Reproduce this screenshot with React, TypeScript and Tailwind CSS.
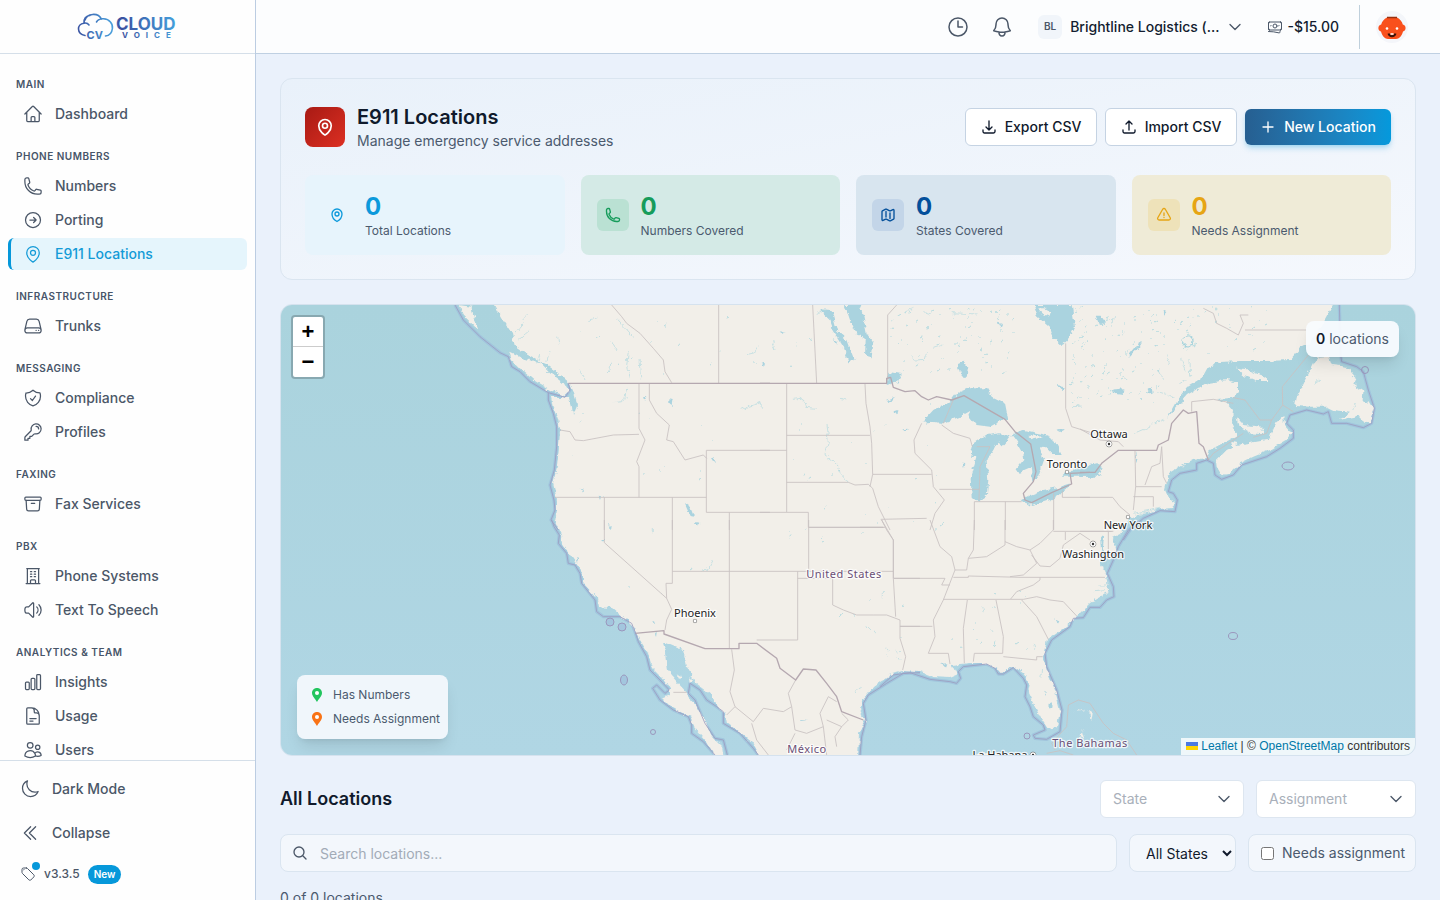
import { useState } from 'react';
import type { ComponentType, ReactNode } from 'react';
import {
  HiOutlineHome,
  HiOutlinePhone,
  HiOutlineArrowRightCircle,
  HiOutlineMapPin,
  HiOutlineServer,
  HiOutlineShieldCheck,
  HiOutlineKey,
  HiOutlineArchiveBox,
  HiOutlineBuildingOffice,
  HiOutlineSpeakerWave,
  HiOutlineChartBar,
  HiOutlineDocumentText,
  HiOutlineUsers,
  HiOutlineMoon,
  HiOutlineChevronDoubleLeft,
  HiOutlineTag,
  HiOutlineClock,
  HiOutlineBell,
  HiOutlineChevronDown,
  HiOutlineBanknotes,
  HiOutlineArrowDownTray,
  HiOutlineArrowUpTray,
  HiOutlinePlus,
  HiOutlineMap,
  HiOutlineExclamationTriangle,
  HiOutlineMagnifyingGlass,
} from 'react-icons/hi2';

type Icon = ComponentType<{ className?: string }>;

const sections: { title: string; items: { label: string; icon: Icon; active?: boolean }[] }[] = [
  { title: 'Main', items: [{ label: 'Dashboard', icon: HiOutlineHome }] },
  {
    title: 'Phone Numbers',
    items: [
      { label: 'Numbers', icon: HiOutlinePhone },
      { label: 'Porting', icon: HiOutlineArrowRightCircle },
      { label: 'E911 Locations', icon: HiOutlineMapPin, active: true },
    ],
  },
  { title: 'Infrastructure', items: [{ label: 'Trunks', icon: HiOutlineServer }] },
  {
    title: 'Messaging',
    items: [
      { label: 'Compliance', icon: HiOutlineShieldCheck },
      { label: 'Profiles', icon: HiOutlineKey },
    ],
  },
  { title: 'Faxing', items: [{ label: 'Fax Services', icon: HiOutlineArchiveBox }] },
  {
    title: 'PBX',
    items: [
      { label: 'Phone Systems', icon: HiOutlineBuildingOffice },
      { label: 'Text To Speech', icon: HiOutlineSpeakerWave },
    ],
  },
  {
    title: 'Analytics & Team',
    items: [
      { label: 'Insights', icon: HiOutlineChartBar },
      { label: 'Usage', icon: HiOutlineDocumentText },
      { label: 'Users', icon: HiOutlineUsers },
    ],
  },
];

function Logo() {
  return (
    <svg viewBox="0 0 104 32" className="h-8 w-26" role="img" aria-label="Cloud Voice">
      <defs>
        <linearGradient id="brand" gradientUnits="userSpaceOnUse" x1="0" y1="20" x2="104" y2="10">
          <stop offset="0" stopColor="#3a4f9f" />
          <stop offset="0.35" stopColor="#4aa0dc" />
          <stop offset="0.42" stopColor="#3a4f9f" />
          <stop offset="1" stopColor="#45a5e0" />
        </linearGradient>
      </defs>
      <g fill="none" stroke="url(#brand)" strokeWidth="1.6" strokeLinecap="round">
        <path d="M9 24.500C.5 23 .5 13 8 12.200C7.500 8 10 4.500 14 4.500M8 12.200C10 11.800 12 12.500 13 14M9 9C11 2.500 22 1 25.500 8.200M20.500 11C22 8.500 24.500 7.600 27.500 7.800C33.500 8.200 37 12.500 36.400 17.500C35.900 22 33.500 24.700 29.500 25" />
      </g>
      <g fill="url(#brand)" fontFamily="Inter, sans-serif" fontWeight="700">
        <text x="10.500" y="27.500" fontSize="11">CV</text>
        <text x="40" y="19" fontSize="17">CLOUD</text>
        <text x="46" y="27" fontSize="8" letterSpacing="6">VOICE</text>
      </g>
    </svg>
  );
}

function Sidebar() {
  return (
    <aside className="flex w-64 shrink-0 flex-col border-r border-[#bccde2] bg-[#fefefe]">
      <div className="flex h-[54px] shrink-0 items-center justify-center border-b border-[#d5dfe9]">
        <Logo />
      </div>
      <nav className="min-h-0 flex-1 overflow-hidden px-2 pt-[22px]" aria-label="Primary">
        {sections.map((section) => (
          <div key={section.title} className="mb-[18px]">
            <h2 className="mb-1.5 pl-2 text-[10px] leading-4 font-semibold tracking-wider text-[#475569] uppercase">
              {section.title}
            </h2>
            <ul className="flex flex-col gap-0.5">
              {section.items.map(({ label, icon: ItemIcon, active }) => (
                <li key={label}>
                  <a
                    href="#"
                    aria-current={active ? 'page' : undefined}
                    className={
                      active
                        ? 'flex h-8 items-center gap-3 rounded-md border-l-3 border-[#0698da] bg-[#e5f5fc] pl-3 text-sm font-medium text-[#149bd7]'
                        : 'flex h-8 items-center gap-3 rounded-md border-l-3 border-transparent pl-3 text-sm font-medium text-[#4b5768]'
                    }
                  >
                    <ItemIcon className="size-5" />
                    {label}
                  </a>
                </li>
              ))}
            </ul>
          </div>
        ))}
      </nav>
      <div className="flex shrink-0 flex-col border-t border-[#d5dfe9] px-5 pt-2 pb-3 text-[#4b5768]">
        <button type="button" className="flex h-10 items-center gap-3 text-left text-sm font-medium">
          <HiOutlineMoon className="size-5" />
          Dark Mode
        </button>
        <button type="button" className="mt-1 flex h-10 items-center gap-3 text-left text-sm font-medium">
          <HiOutlineChevronDoubleLeft className="size-5" />
          Collapse
        </button>
        <a href="#" className="mt-[7px] flex h-7 items-center gap-2 text-xs font-medium">
          <span className="relative">
            <HiOutlineTag className="size-4" />
            <span className="absolute -top-1 -right-1 size-2 rounded-full bg-[#0698da]" />
          </span>
          v3.3.5
          <span className="rounded-full bg-[#0698da] px-1.5 py-0.5 text-[10px] leading-[15px] font-semibold text-white">
            New
          </span>
        </a>
      </div>
    </aside>
  );
}

function Avatar() {
  return (
    <svg viewBox="0 0 32 32" className="size-8 rounded-full bg-[#f4f6fa]" role="img" aria-label="Account">
      <path d="M11 6.500H21C24 8 26 10.500 26.800 13.500C30.500 14 30.500 20 27 20.500C26 25 23 28 20 28H12C9 28 6 25 5 20.500C1.500 20 1.500 14 5.200 13.500C6 10.500 8 8 11 6.500Z" fill="#f9501c" />
      <path d="M11 6.500H21" stroke="#99310f" strokeWidth="1.500" />
      <circle cx="11" cy="17.500" r="1.300" fill="#fff" />
      <circle cx="21" cy="17.500" r="1.300" fill="#fff" />
      <path d="M12.500 22.500C13.500 26 18.500 26 19.500 22.500" stroke="#3a1208" strokeWidth="2" fill="none" />
      <path d="M14.500 23H17.500" stroke="#fff" strokeWidth="1.500" />
    </svg>
  );
}

function TopBar() {
  return (
    <header className="flex h-[54px] shrink-0 items-center justify-end border-b border-[#bfd0e2] bg-[#fcfdfe] pr-8 text-[#4b5768]">
      <button type="button" aria-label="History" className="mr-5">
        <HiOutlineClock className="size-6" />
      </button>
      <button type="button" aria-label="Notifications" className="mr-6">
        <HiOutlineBell className="size-6" />
      </button>
      <button type="button" className="flex items-center gap-2 text-sm font-medium text-[#131d30]">
        <span className="flex size-6 items-center justify-center rounded-md bg-[#f1f5fa] text-[10px] font-semibold text-[#4b5768]">
          BL
        </span>
        Brightline Logistics (...
        <HiOutlineChevronDown className="mr-1 size-4 stroke-2 text-[#4b5768]" />
      </button>
      <a href="#" className="ml-5 flex items-center gap-1 text-sm font-medium text-[#131d30]">
        <HiOutlineBanknotes className="size-4 text-[#4b5768]" />
        -$15.00
      </a>
      <div className="mr-4 ml-5 h-11 w-px bg-[#bfd0dc]" />
      <button type="button" aria-label="Account menu">
        <Avatar />
      </button>
    </header>
  );
}

const stats: { label: string; icon: Icon; card: string; box: string; tone: string }[] = [
  { label: 'Total Locations', icon: HiOutlineMapPin, card: 'bg-[#e7f4fc]', box: 'bg-[#e7f4fc]', tone: 'text-[#0c99db]' },
  { label: 'Numbers Covered', icon: HiOutlinePhone, card: 'bg-[#d4eae6]', box: 'bg-[#bae1d3]', tone: 'text-[#169c5b]' },
  { label: 'States Covered', icon: HiOutlineMap, card: 'bg-[#d8e5ef]', box: 'bg-[#c3d5e8]', tone: 'text-[#04509b]' },
  { label: 'Needs Assignment', icon: HiOutlineExclamationTriangle, card: 'bg-[#efebd7]', box: 'bg-[#eee2b9]', tone: 'text-[#e6a514]' },
];

function Summary() {
  return (
    <section className="rounded-xl border border-[#dae5f0] bg-linear-to-br from-[#e9f1fa] to-[#f5f8fd] p-6">
      <div className="flex items-center justify-between gap-6">
        <div className="flex items-center gap-3">
          <div className="flex size-10 items-center justify-center rounded-lg bg-linear-to-br from-[#a81a14] to-[#dc2f22] text-white">
            <HiOutlineMapPin className="size-5 stroke-2" />
          </div>
          <div>
            <h1 className="text-xl leading-7 font-semibold text-[#101a2c]">E911 Locations</h1>
            <p className="text-sm leading-5 text-[#4b5a6e]">Manage emergency service addresses</p>
          </div>
        </div>
        <div className="flex items-center gap-2 text-sm font-medium">
          <button type="button" className="flex h-[38px] w-33 items-center justify-center gap-2 rounded-md border border-[#c5d3e3] bg-white text-[#101a2c]">
            <HiOutlineArrowDownTray className="size-4 stroke-2" />
            Export CSV
          </button>
          <button type="button" className="flex h-[38px] w-33 items-center justify-center gap-2 rounded-md border border-[#c5d3e3] bg-white text-[#101a2c]">
            <HiOutlineArrowUpTray className="size-4 stroke-2" />
            Import CSV
          </button>
          <button type="button" className="flex h-9 w-[146px] items-center justify-center gap-2 rounded-md bg-linear-to-r from-[#265f91] to-[#0499dc] text-white shadow-md shadow-[#0499dc]/25">
            <HiOutlinePlus className="size-4 stroke-2" />
            New Location
          </button>
        </div>
      </div>
      <dl className="mt-6 grid grid-cols-4 gap-4">
        {stats.map(({ label, icon: StatIcon, card, box, tone }) => (
          <div key={label} className={`flex items-center gap-3 rounded-lg p-4 ${card} ${tone}`}>
            <span className={`flex size-8 items-center justify-center rounded-md ${box}`}>
              <StatIcon className="size-4 stroke-2" />
            </span>
            <div className="flex flex-col-reverse">
              <dt className="text-xs leading-4 text-[#4b5a6e]">{label}</dt>
              <dd className="text-2xl leading-8 font-bold">0</dd>
            </div>
          </div>
        ))}
      </dl>
    </section>
  );
}

const mainland =
  'M495 305 502 318 512 333 515 347 527 355 540 362 547 365 557 372 565 380 570 384 575 395 577 405 573 415 572 407 569 397 551 397 553 407 558 420 560 430 559 447 557 467 553 483 557 500 557 510 555 522 561 535 562 543 568 552 575 562 583 573 583 583 597 598 598 607 612 608 623 617 633 627 640 640 648 653 652 667 662 677 670 688 670 694 662 697 673 708 690 717 695 728 707 742 717 760 724 760 722 747 712 737 705 720 697 707 687 693 677 682 667 670 665 653 663 642 675 647 683 650 687 667 695 682 712 695 718 707 725 713 727 722 740 732 753 743 762 760 858 760 859 733 865 720 860 710 862 700 873 687 890 675 903 671 920 672 933 677 950 678 957 675 952 665 970 663 983 663 993 667 1002 672 1013 666 1023 673 1030 683 1028 693 1035 707 1042 720 1048 729 1057 727 1060 710 1055 690 1047 670 1043 657 1047 640 1057 633 1070 623 1077 616 1090 603 1108 592 1107 580 1105 570 1100 563 1102 547 1108 560 1117 548 1112 537 1120 533 1128 522 1130 517 1147 513 1160 509 1172 508 1175 502 1168 497 1165 490 1167 482 1170 473 1180 467 1193 460 1207 458 1210 450 1223 443 1237 435 1232 423 1233 410 1227 403 1217 399 1232 398 1238 392 1238 383 1227 380 1207 383 1187 395 1167 418 1177 400 1187 387 1203 377 1208 368 1220 362 1240 361 1267 361 1290 360 1300 348 1310 343 1325 320 1336 300 495 300Z';

// Each sheet is drawn at three times the size of the map, from its own corner.
const sheets: { at: string; land?: string; water?: string; sea?: string; state: string; country?: string; streams?: string }[] = [
  {
    at: 'translate(440 300) scale(.33333)',
    land: 'M208 155 250 175 300 190 330 220 370 250 385 275 370 288 330 270 280 240 240 205 215 180ZM55 15 95 20 100 50 118 88 105 80 75 50Z',
    water: 'M735 610 750 620 762 650 752 648ZM688 298 698 300 695 318 688 312ZM965 188 978 190 976 198ZM816 474 826 472 824 486ZM612 290 622 292 616 302ZM422 565 432 570 430 580ZM476 590 484 588 480 600ZM502 675 512 685 508 690ZM768 668 776 666 772 678Z',
    sea: 'M45 15 70 60 120 110 180 158 205 170 215 200 240 215 270 245 325 278 375 292 390 270 385 250M325 278V300L340 340 350 380V440L343 510 330 555 342 600 345 630 333 660 355 690',
    state: 'M515 15 545 50 560 70 600 100 640 145 670 180 675 215 695 248M836 15V250M597 252V385L615 420 590 485 597 500V592M628 252V300L650 340 688 375 680 420 700 425 735 480 790 465 800 475M990 451H799V637H990M345 592H799M493 592V690M697 592V690M868 637V690M360 390 390 395 405 420 430 422 520 405 597 403',
    country: 'M385 250H990',
    streams: 'M905 328 930 318 950 312 958 302 965 320M515 308 545 305 555 295 560 265M500 220 510 210 512 185M568 235 560 200 565 150M600 180 605 235M515 125 528 150M445 62 475 52M915 162 945 155 955 140M420 210 435 240M350 110 355 135M300 160 290 190M250 70 225 100M270 90 235 120M530 55 580 110M260 45 245 60M330 150 320 185',
  },
  {
    at: 'translate(760 300) scale(.33333)',
    water:
      'M485 368 520 330 575 300 590 280 625 265 680 265 695 290 735 310 745 360 725 360 690 380 650 375 625 345 632 332 600 350 550 370 520 365ZM630 470 640 430 680 405 720 400 755 408 730 440 712 425 700 450 680 480 685 540 680 590 655 608 635 590 632 530 650 470ZM755 405 790 390 850 402 880 415 905 465 880 465 850 435 840 448 852 480 835 530 820 545 815 500 780 515 765 510 790 480 785 450 770 425ZM785 598 810 585 850 570 900 560 935 550 920 570 870 600 815 618ZM905 530 930 510 990 503V530H915ZM820 15 830 45 870 80 880 110 905 135 930 110 945 80 935 15ZM255 15 300 15 310 50 320 100 340 130 335 175 318 170 320 120 290 100 270 60ZM178 28 215 30 232 95 262 120 285 180 265 187 250 140 232 112 218 92 212 60ZM592 190 610 182 625 200 620 228 600 225ZM385 215 425 222 412 248 398 250 380 255ZM378 300 402 290 396 306ZM400 335 415 330 412 350ZM428 388 440 386 436 396ZM218 118 230 122 232 138ZM62 95 74 92 72 102ZM715 68 726 72 722 80ZM892 258 915 262 905 270ZM892 388 918 387 905 394ZM608 490 616 488 612 505Z',
    land: 'M832 25 850 25 875 40 872 50 850 42ZM805 408 835 405 845 412 820 418Z',
    state:
      'M158 15 170 250M383 240V45L410 15M80 252V636M80 406H330M80 547H265L285 555 325 553 338 565 355 620 375 660 390 690M315 252 318 310 330 380 335 430 338 523H515M338 523 330 560M485 370 462 420 465 460 515 510 520 560 553 600 525 640 510 690M362 658 500 655M545 375 580 400 630 415 637 440M538 568H658M643 690V605H785M736 605V690M881 580V690M907 572V592H990M917 130V325L935 380 990 397M0 451H80M0 637H145V682H375M580 300 550 370M650 440 690 440 660 500 657 600',
    country: 'M0 250H380V235L392 232 400 262 435 275 465 272 485 290 505 300 530 290 575 300 612 287 735 358 765 395 812 432 828 515 820 545 790 580 795 600 815 608 875 578 935 552 930 520 990 517',
    streams: 'M98 298 120 295 135 305 140 322 170 325M198 375 205 430 195 465 235 495 240 520 265 547M240 295 262 300M450 165 470 180 495 178 500 160M520 145 550 135M575 38 650 42M490 35 510 42M430 35 460 25M38 125 45 150M170 40 200 30M940 320 965 318',
  },
  {
    at: 'translate(1080 300) scale(.33333)',
    land: 'M408 482 440 450 470 435 530 425 572 418 575 400 590 365 610 350 612 375 630 395 640 395 620 420 570 450 520 470 480 490 450 520 425 525 410 500ZM470 350 490 375 550 380 545 402 510 400 475 380ZM468 203 500 208 540 225 565 243 530 243 490 225ZM720 170 745 168 755 195 800 200 830 235 820 255 850 275 848 300 862 310 868 300 880 320 870 370 850 368 835 345 825 350 800 355 780 360 810 335 760 330 740 320 690 320 645 318 650 290 665 260 680 230 700 190ZM453 425 472 430 465 445Z',
    water: 'M0 503 50 490 68 500 55 530 0 530ZM145 165 165 140 188 125 170 150 150 170ZM98 270 130 265 128 285 108 282ZM200 265 215 265 218 278 208 280ZM50 50 62 50 75 70 60 75ZM250 30 262 36 254 46ZM168 452 172 480 168 490Z',
    sea: 'M130 720 150 690 190 655 240 632 285 635 292 600 280 580 265 575 275 540 300 520 350 510 350 490 380 480 400 490 405 525 425 538 460 525 485 495 560 470 600 445 640 415 640 390 620 370 630 345 680 330 730 342 745 335 755 370 800 370 850 383 875 370 883 325 865 270 850 215 830 200 785 185 782 165 778 15',
    state:
      'M0 387 60 420 115 425 130 440M165 452 167 560 160 630M245 440 240 490 215 500 195 555M167 560H245M245 440 250 530 260 550M160 590H220V620M0 592H98L120 620 150 645M0 694H100M495 90H680M370 25 400 40 410 70 440 85 475 105 490 70 480 45 505 45M685 165 607 260 608 315 640 335M608 315 575 360 540 360 510 320 495 300 460 293M335 335V305L400 298 460 310M575 360 560 400 520 412M490 400 400 460 385 480',
    country: 'M0 517H45L65 490 115 451H230L235 435 265 420 275 370 310 330 325 340 350 335 357 430 370 440 385 480',
    streams: 'M165 400 200 385 250 358M235 275 285 292M305 175 315 215M330 180 332 230M260 165 270 195M700 255 720 240M830 310 815 330M160 640 240 625M165 648 210 632M100 45 95 80M235 210 250 240M300 250 320 240M130 230 145 240',
  },
  {
    at: 'translate(540 520) scale(.33333)',
    land: 'M413 460 425 468 422 478ZM450 472 460 480 452 486Z',
    water: 'M330 300 340 305 342 314ZM204 12 212 16 210 26ZM470 10 478 8 474 18ZM190 60 196 60 194 68ZM108 108 118 112 114 130ZM780 597 805 600 780 602ZM345 338 350 338 348 352Z',
    sea: 'M35 0 42 20 58 45 55 70 80 100 85 130 105 135 120 160 125 190 165 240 170 275 190 290 240 290 275 310 285 335 295 365 320 410 330 450 360 480 388 510 375 520 350 495 338 505 360 540 400 570 445 590 455 615 455 640 490 665 525 705M562 705 550 660 525 655 495 610 465 540 445 520 450 490 480 510 500 540 530 560 550 575V610L600 640 640 685 655 705M960 705 965 650 978 600 970 550 985 525 1040 490 1090 460 1140 458',
    state:
      'M193 0V68L380 235 395 268 380 300 375 330M397 0V190H378L380 235M397 154H1060M568 0V385M806 0V154M806 22H1030M1025 0 1040 30 1060 60V175L1067 290M773 154V360H650M773 175H878V255L910 270 950 285 1000 285 1040 285 1080 300V355L1097 410 1088 450M1062 175H1140M1080 319H1140M575 388 583 450 570 515 585 560 560 585M585 560 640 605 670 565 730 575 755 560 745 520 767 480M755 560 765 630 800 640 850 620 840 580 865 530 890 545M860 600 905 620 925 600 905 580M635 610 650 660 685 705M400 517H440M765 640 740 690M850 620 860 705M905 620 885 650 890 680',
    country: 'M285 340 372 332V342L495 386H597V370H650L710 415 720 445 767 480 790 447 828 450 860 490 890 530 905 575 970 600',
    streams: 'M485 154 505 145 520 120M1035 400 1045 412M1070 388 1080 396M1030 215V235M340 30V45M945 515 965 505M1000 330 1008 340M980 320 990 330',
  },
  {
    at: 'translate(860 520) scale(.33333)',
    land: 'M340 705 380 695 420 705ZM660 655 665 630 672 655ZM640 575 660 570 675 572 660 574ZM685 572 698 580 695 598 692 582Z',
    water: 'M565 555 575 550 578 562 570 568ZM240 432 262 430 258 440ZM720 50 732 50 728 90 738 130 736 155 728 150 724 100ZM755 55 768 65 772 80ZM580 298 598 305 596 312ZM553 515 558 518 556 525Z',
    sea: 'M60 500 100 465 150 458 210 478 270 485 290 490 302 475 295 455 310 440 380 432 405 445 415 462 430 462 460 443 490 475 500 495 495 530 510 560 520 590 550 615 555 630 520 645 525 655 560 658 600 635 606 570 590 510 560 440 555 400 575 360 630 320 640 295 670 293 690 262 720 262 740 240 762 230 760 200 742 160 760 120 775 80 805 30 835 5',
    state:
      'M0 22H70M65 0 100 60V175H255L245 195H270M210 0 240 80 275 110 285 150 250 240 220 300 225 350 205 400H265L270 432M343 0 340 90 325 115 320 150 285 150M325 115 380 110 435 75V0M435 65 470 80 510 90 540 70 580 30V0M580 34H755M510 90 530 130 490 165 450 170M515 105 540 138 570 140 600 115 610 75 660 40 690 60M616 36V60M745 34V95M280 172H325V168L480 172H735M540 172V180L520 195 470 215 452 237M250 238H490L530 230 570 240 610 245 650 288M485 240 530 290 565 358M322 240 310 325 313 430M408 240 430 350 428 400H343L340 425M430 410 530 420V410H548M120 319H217M585 690 575 670 620 620 625 555 655 540 690 550 730 610 760 640 800 660 830 705M560 700 600 692 640 705',
    streams: 'M715 195H740M700 215 735 212M705 240 725 245M365 260 370 275M520 370 525 390M395 330 402 340M110 410 118 418M80 385 88 395M545 440 543 470',
  },
];

function scatter(seed: number, count: number, x: number, y: number, w: number, h: number) {
  let s = seed;
  const next = () => {
    s = (s * 16807) % 2147483647;
    return s / 2147483647;
  };
  let d = '';
  for (let i = 0; i < count; i++) {
    const px = Math.round(x + next() * w);
    const py = Math.round(y + next() * h);
    const dx = Math.round(next() * 3);
    d += `M${px} ${py}l${dx} ${1 - dx}`;
  }
  return d;
}

const ponds =
  scatter(17, 75, 890, 308, 125, 65) +
  scatter(29, 110, 1070, 308, 90, 95) +
  scatter(53, 45, 1150, 306, 120, 48) +
  scatter(71, 18, 580, 310, 230, 65) +
  scatter(83, 30, 790, 390, 150, 160) +
  scatter(97, 18, 560, 400, 230, 200) +
  scatter(41, 20, 840, 590, 190, 65);

const places = [
  { name: 'Ottawa', x: 1109, y: 438, mx: 1109, my: 444, capital: true },
  { name: 'Toronto', x: 1067, y: 468, mx: 1067, my: 472 },
  { name: 'New York', x: 1128, y: 529, mx: 1128, my: 517 },
  { name: 'Washington', x: 1093, y: 558, mx: 1093, my: 544, capital: true },
  { name: 'Phoenix', x: 695, y: 617, mx: 695, my: 621 },
  { name: 'La Habana', x: 1000, y: 759, mx: 1033, my: 755, capital: true },
];

const countries = [
  { name: 'United States', x: 844, y: 578 },
  { name: 'México', x: 807, y: 753 },
  { name: 'The Bahamas', x: 1090, y: 747 },
];

function BaseMap() {
  return (
    <svg viewBox="281 305 1134 450" preserveAspectRatio="xMidYMid slice" className="block size-full" role="img" aria-label="Map of North America">
      <defs>
        <linearGradient id="ocean" x1="0" y1="0" x2="0" y2="1">
          <stop offset="0" stopColor="#aad3dd" />
          <stop offset="1" stopColor="#b0d6e4" />
        </linearGradient>
        <filter id="shore" x="0" y="0" width="1" height="1">
          <feTurbulence type="fractalNoise" baseFrequency=".16" numOctaves="3" seed="4" />
          <feDisplacementMap in="SourceGraphic" scale="6" xChannelSelector="R" yChannelSelector="G" />
        </filter>
      </defs>
      <rect x="281" y="305" width="1134" height="450" fill="url(#ocean)" />
      <g fill="none" strokeLinejoin="round">
        {sheets.map((s) => (
          <g key={s.at} transform={s.at}>
            <path d={s.sea} stroke="#a1c5dd" strokeWidth="10" />
          </g>
        ))}
      </g>
      <g filter="url(#shore)">
        <rect x="281" y="305" width="1134" height="450" fill="none" />
        <path d={mainland} fill="#f2efe9" />
        {sheets.map((s) => (
          <g key={s.at} transform={s.at}>
            <path d={s.water} fill="#aad3df" />
            <path d={s.land} fill="#f2efe9" />
            <path d={s.streams} fill="none" stroke="#b2d9df" strokeWidth="2" />
          </g>
        ))}
        <path d={ponds} fill="none" stroke="#b5dbe0" strokeWidth="1" />
        <circle cx="1188" cy="341" r="5" fill="none" stroke="#a3d2dc" strokeWidth="1.200" />
      </g>
      <g fill="none" strokeLinejoin="round">
        {sheets.map((s) => (
          <g key={s.at} transform={s.at}>
            <path d={s.state} stroke="#c8c1c1" strokeWidth="2.600" />
            <path d={s.country} stroke="#b5a8b0" strokeWidth="4" />
            <path d={s.sea} stroke="#9d9fc0" strokeWidth="2.600" />
          </g>
        ))}
        <g stroke="#9b97bd">
          <ellipse cx="624" cy="680" rx="3.500" ry="5" fill="#a3c6de" />
          <circle cx="653" cy="732" r="2.500" />
          <circle cx="1027" cy="736" r="3" />
          <ellipse cx="1233" cy="636" rx="4.500" ry="3.500" />
          <ellipse cx="1288" cy="466" rx="6" ry="4" />
          <circle cx="1365" cy="370" r="3.500" />
          <circle cx="610" cy="622" r="4" fill="#a3c6de" />
          <circle cx="622" cy="627" r="4" fill="#a3c6de" />
        </g>
      </g>
      <g fontFamily="'Noto Sans', sans-serif" textAnchor="middle" strokeLinejoin="round" paintOrder="stroke">
        {places.map((p) => (
          <g key={p.name}>
            <circle cx={p.mx} cy={p.my} r={p.capital ? 2.8 : 1.7} fill="#fff" stroke="#333" strokeWidth=".9" />
            {p.capital && <circle cx={p.mx} cy={p.my} r="1.2" fill="#333" />}
            <text x={p.x} y={p.y} fontSize="11" fill="#222" stroke="#fff" strokeOpacity=".8" strokeWidth="2.500">
              {p.name}
            </text>
          </g>
        ))}
        {countries.map((c) => (
          <text key={c.name} x={c.x} y={c.y} fontSize="11" letterSpacing=".5" fill="#6a4f76" stroke="#fff" strokeOpacity=".8" strokeWidth="2.500">
            {c.name}
          </text>
        ))}
      </g>
    </svg>
  );
}

function Pin({ className }: { className: string }) {
  return (
    <svg viewBox="0 0 12 16" className={`h-4 w-3 ${className}`} aria-hidden="true">
      <path d="M6 1C3 1 1 3.200 1 6C1 9 4.500 12 6 15C7.500 12 11 9 11 6C11 3.200 9 1 6 1Z" fill="currentColor" />
      <circle cx="6" cy="6" r="2" fill="#fff" />
    </svg>
  );
}

function MapPanel() {
  return (
    <section aria-label="Locations map" className="relative h-[452px] shrink-0 overflow-hidden rounded-xl border border-[#d5e2ee]">
      <BaseMap />
      <div className="absolute top-2.5 left-2.5 flex flex-col rounded border-2 border-black/20 bg-white bg-clip-padding font-['Liberation_Sans',sans-serif] text-[22px] leading-[30px] font-bold text-black">
        <button type="button" aria-label="Zoom in" className="flex size-[30px] items-center justify-center border-b border-[#ccc]">
          +
        </button>
        <button type="button" aria-label="Zoom out" className="flex size-[30px] items-center justify-center">
          −
        </button>
      </div>
      <p className="absolute top-4 right-4 rounded-lg bg-[#f8fbfe]/95 px-2.5 py-2 text-sm leading-5 text-[#4b5a6e] shadow-lg">
        <strong className="font-semibold text-[#101a2c]">0</strong> locations
      </p>
      <ul className="absolute bottom-4 left-4 flex flex-col gap-2 rounded-lg bg-[#f3f8fc]/95 py-3 pr-2 pl-3.5 text-xs leading-4 text-[#4b5a6e] shadow-lg">
        <li className="flex items-center gap-2.5">
          <Pin className="text-[#22c55e]" />
          Has Numbers
        </li>
        <li className="flex items-center gap-2.5">
          <Pin className="text-[#f97316]" />
          Needs Assignment
        </li>
      </ul>
      <p className="absolute right-0 bottom-0 bg-white/80 px-[5px] font-['Liberation_Sans',sans-serif] text-xs leading-[17px] text-[#333]">
        <a href="#" className="text-[#0078a8]">
          <svg viewBox="0 0 12 8" className="mr-[3px] inline h-2 w-3 align-baseline" aria-hidden="true">
            <path d="M0 0h12v4H0z" fill="#4c7be1" />
            <path d="M0 4h12v4H0z" fill="#ffd500" />
          </svg>
          Leaflet
        </a>{' '}
        | ©{' '}
        <a href="#" className="text-[#0078a8]">
          OpenStreetMap
        </a>{' '}
        contributors
      </p>
    </section>
  );
}

function FilterSelect({ label, width }: { label: string; width: string }) {
  return (
    <div className={`relative ${width}`}>
      <select
        aria-label={label}
        defaultValue=""
        className="h-[38px] w-full appearance-none rounded-md border border-[#dde6f0] bg-white px-3 text-sm text-[#a9b0ba]"
      >
        <option value="">{label}</option>
      </select>
      <HiOutlineChevronDown className="pointer-events-none absolute top-[11px] right-3 size-4 stroke-2 text-[#4b5768]" />
    </div>
  );
}

function Field({ children, className }: { children: ReactNode; className: string }) {
  return <div className={`flex h-[38px] items-center rounded-lg border border-[#dae5f0] bg-[#f3f7fc] ${className}`}>{children}</div>;
}

function Locations() {
  const [query, setQuery] = useState('');
  return (
    <section className="flex flex-col gap-4">
      <div className="flex items-center justify-between">
        <h2 className="text-lg leading-7 font-semibold text-[#101a2c]">All Locations</h2>
        <div className="flex gap-3">
          <FilterSelect label="State" width="w-36" />
          <FilterSelect label="Assignment" width="w-40" />
        </div>
      </div>
      <div className="flex gap-3">
        <Field className="flex-1 gap-3 pl-[11px]">
          <HiOutlineMagnifyingGlass className="size-4 stroke-2 text-[#4b5768]" />
          <input
            type="search"
            aria-label="Search locations"
            placeholder="Search locations..."
            value={query}
            onChange={(e) => setQuery(e.target.value)}
            className="h-full flex-1 bg-transparent text-sm text-[#101a2c] outline-none placeholder:text-[#a2abb7]"
          />
        </Field>
        <Field className="w-[107px] pl-3">
          <select aria-label="State filter" className="h-full w-full bg-transparent text-sm text-[#101a2c]">
            <option>All States</option>
          </select>
        </Field>
        <Field className="px-2.5 pl-3">
          <label className="flex items-center gap-2 text-sm text-[#4b5a6e]">
            <input type="checkbox" className="size-[13px]" />
            Needs assignment
          </label>
        </Field>
      </div>
      <p className="text-sm leading-5 text-[#4b5a6e]">0 of 0 locations</p>
    </section>
  );
}

export default function App() {
  return (
    <div className="flex h-screen overflow-hidden bg-[#eaf1fb] font-['Inter',sans-serif]">
      <Sidebar />
      <div className="flex min-w-0 flex-1 flex-col">
        <TopBar />
        <main className="flex min-h-0 flex-1 flex-col gap-6 overflow-hidden p-6">
          <div className="shrink-0">
            <Summary />
          </div>
          <MapPanel />
          <Locations />
        </main>
      </div>
    </div>
  );
}
